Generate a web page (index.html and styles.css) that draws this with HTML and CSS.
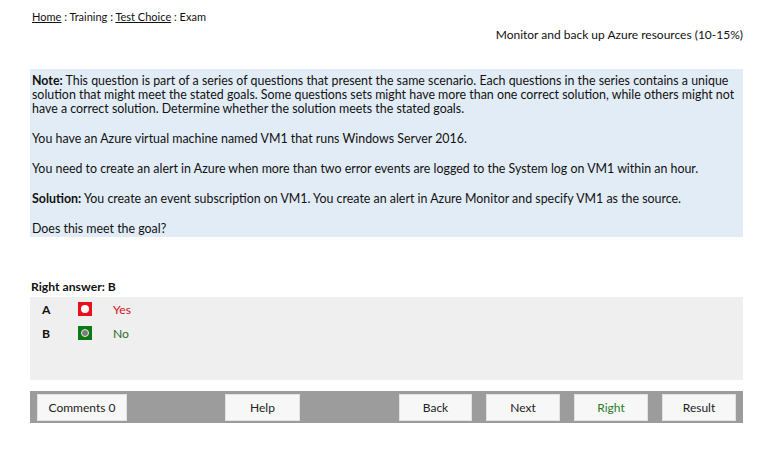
FILE: index.html
```html
<!DOCTYPE html>
<html>
<head>
<meta charset="utf-8">
<link rel="stylesheet" href="styles.css">
</head>
<body>
<div class="page">
  <div class="crumbs"><a href="#">Home</a> : Training : <a href="#">Test Choice</a> : Exam</div>
  <div class="topic">Monitor and back up Azure resources (10-15%)</div>
  <div class="question">
    <p><b>Note:</b> This question is part of a series of questions that present the same scenario. Each questions in the series contains a unique solution that might meet the stated goals. Some questions sets might have more than one correct solution, while others might not have a correct solution. Determine whether the solution meets the stated goals.</p>
    <p>You have an Azure virtual machine named VM1 that runs Windows Server 2016.</p>
    <p>You need to create an alert in Azure when more than two error events are logged to the System log on VM1 within an hour.</p>
    <p><b>Solution:</b> You create an event subscription on VM1. You create an alert in Azure Monitor and specify VM1 as the source.</p>
    <p>Does this meet the goal?</p>
  </div>
  <div class="answer-title">Right answer: B</div>
  <div class="answers">
    <div class="row">
      <span class="letter">A</span>
      <span class="mark wrong"><span class="dot"></span></span>
      <span class="txt wrong-txt">Yes</span>
    </div>
    <div class="row">
      <span class="letter">B</span>
      <span class="mark right"><span class="dot"></span></span>
      <span class="txt right-txt">No</span>
    </div>
  </div>
  <div class="bar">
    <div class="btn w90">Comments 0</div>
    <div class="btn w75 ml98">Help</div>
    <div class="spacer"></div>
    <div class="btn w73">Back</div>
    <div class="btn w74">Next</div>
    <div class="btn w74 green">Right</div>
    <div class="btn w74">Result</div>
  </div>
</div>
</body>
</html>
```
FILE: styles.css
```css
html, body { margin: 0; padding: 0; background: #fff; }
body {
  font-family: "Lato", "Open Sans", sans-serif;
  color: #111;
  font-size: 12px;
}
.page {
  width: 713px;
  margin-left: 30px;
  padding-top: 9px;
}
.crumbs {
  font-size: 11px;
  line-height: 16px;
  margin-left: 2px;
}
.crumbs a { color: #111; text-decoration: underline; }
.topic {
  text-align: right;
  font-size: 12px;
  line-height: 16px;
  margin-top: 2px;
}
.question {
  margin-top: 26px;
  background: #e1ecf6;
  padding: 5px 2px 1px 2px;
}
.question p {
  margin: 0 0 16px 0;
  font-size: 12.4px;
  line-height: 14px;
}
.question p:last-child { margin-bottom: 0; }
.answer-title {
  margin-top: 42px;
  font-weight: bold;
  font-size: 12.2px;
  line-height: 16px;
  margin-left: 1px;
}
.answers {
  margin-top: 2px;
  background: #efefef;
  height: 83px;
  padding-top: 5px;
  box-sizing: border-box;
}
.row {
  display: flex;
  align-items: center;
  height: 14px;
  margin-bottom: 10px;
  font-size: 12.2px;
}
.letter { width: 48px; padding-left: 12px; box-sizing: border-box; font-weight: bold; }
.mark {
  width: 14px; height: 14px;
  display: flex; align-items: center; justify-content: center;
  margin-right: 21px;
}
.mark.wrong { background: #e8101a; }
.mark.wrong .dot { width: 8px; height: 8px; border-radius: 50%; background: #fff; }
.mark.right { background: #0b7a12; }
.mark.right .dot { width: 6px; height: 6px; border-radius: 50%; background: #7a7a7a; border: 1px solid #e8e8e8; }
.wrong-txt { color: #d0101a; }
.right-txt { color: #2d6a2d; }
.bar {
  margin-top: 11px;
  background: #9c9c9c;
  height: 32px;
  display: flex;
  align-items: center;
  padding: 0 7px;
  gap: 14px;
}
.spacer { flex: 1; }
.btn {
  height: 27px;
  background: #f7f7f7;
  border: 1px solid #e2e2e2;
  box-sizing: border-box;
  display: flex; align-items: center; justify-content: center;
  font-size: 12px;
  color: #222;
}
.w90 { width: 90px; }
.w75 { width: 75px; }
.w73 { width: 73px; }
.w74 { width: 74px; }
.ml98 { margin-left: 84px; }
.green { color: #2a7a2a; }
```
